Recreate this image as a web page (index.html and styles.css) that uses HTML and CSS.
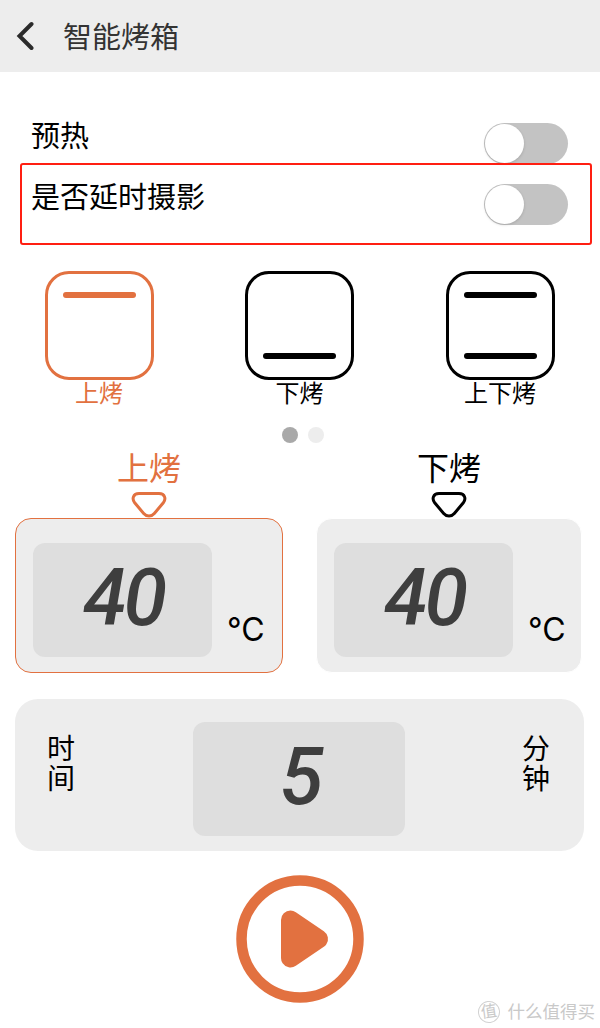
FILE: index.html
```html
<!DOCTYPE html>
<html lang="zh-CN">
<head>
<meta charset="UTF-8">
<meta name="viewport" content="width=device-width, initial-scale=1.0">
<title>智能烤箱</title>
<link rel="stylesheet" href="styles.css">
</head>
<body>
  <header>
    <svg class="back" width="18" height="30" viewBox="0 0 18 30">
      <path d="M15.5 3 L3.5 15 L15.5 27" fill="none" stroke="#2b2b2b" stroke-width="4" stroke-linecap="round"/>
    </svg>
    <h1>智能烤箱</h1>
  </header>

  <main>
    <div class="row">
      <span class="row-label">预热</span>
      <span class="switch"></span>
    </div>
    <div class="row highlight">
      <span class="row-label">是否延时摄影</span>
      <span class="switch"></span>
    </div>

    <div class="modes">
      <div class="mode active">
        <div class="mode-icon"><i></i></div>
        <span>上烤</span>
      </div>
      <div class="mode">
        <div class="mode-icon bottom"><i></i></div>
        <span>下烤</span>
      </div>
      <div class="mode">
        <div class="mode-icon"><i></i><i></i></div>
        <span>上下烤</span>
      </div>
    </div>

    <div class="dots">
      <span class="dot current"></span>
      <span class="dot"></span>
    </div>

    <div class="temps">
      <div class="temp active">
        <span class="temp-label">上烤</span>
        <svg class="arrow" width="36" height="27" viewBox="0 0 36 27">
          <path d="M8 2.6 H28 C34 2.6 35.3 8 32.3 11.8 L23.3 22.5 C20.4 25.9 15.6 25.9 12.7 22.5 L3.7 11.8 C0.7 8 2 2.6 8 2.6 Z" fill="none" stroke="currentColor" stroke-width="3"/>
        </svg>
        <div class="temp-card">
          <div class="screen">40</div>
          <span class="unit">°C</span>
        </div>
      </div>
      <div class="temp">
        <span class="temp-label">下烤</span>
        <svg class="arrow" width="36" height="27" viewBox="0 0 36 27">
          <path d="M8 2.6 H28 C34 2.6 35.3 8 32.3 11.8 L23.3 22.5 C20.4 25.9 15.6 25.9 12.7 22.5 L3.7 11.8 C0.7 8 2 2.6 8 2.6 Z" fill="none" stroke="currentColor" stroke-width="3"/>
        </svg>
        <div class="temp-card">
          <div class="screen">40</div>
          <span class="unit">°C</span>
        </div>
      </div>
    </div>

    <div class="time-card">
      <span class="time-text">时间</span>
      <div class="screen">5</div>
      <span class="time-text">分钟</span>
    </div>

    <svg class="play" width="128" height="128" viewBox="0 0 128 128">
      <circle cx="64" cy="64" r="58.5" fill="none" stroke="#e27140" stroke-width="10.5"/>
      <path d="M54.5 45 L82.5 64 L54.5 83 Z" fill="#e27140" stroke="#e27140" stroke-width="19" stroke-linejoin="round"/>
    </svg>
  </main>

  <div class="watermark">
    <span class="wm-logo">值</span>
    <span>什么值得买</span>
  </div>
</body>
</html>
```
FILE: styles.css
```css
* {
  box-sizing: border-box;
}

body {
  position: relative;
  margin: 0;
  height: 1028px;
  overflow: hidden;
  background: #fff;
  color: #000;
  font-family: Inter, "Noto Sans CJK SC", sans-serif;
}

header {
  display: flex;
  align-items: center;
  gap: 29px;
  height: 72px;
  padding-left: 16px;
  background: #ededed;
}

h1 {
  margin: 4px 0 0;
  color: #333;
  font-size: 29px;
  font-weight: 400;
  line-height: 40px;
}

main {
  display: flex;
  flex-direction: column;
  padding-top: 40px;
}

.row {
  display: flex;
  justify-content: space-between;
  height: 51px;
  padding: 3px 32px 0 31px;
}

.row-label {
  margin-top: 2px;
  font-size: 29px;
  line-height: 40px;
}

.switch {
  width: 84px;
  height: 41px;
  margin-top: 8px;
  padding: 1px;
  border-radius: 21px;
  background: #c3c3c3;
}

.switch::before {
  content: "";
  display: block;
  width: 39px;
  height: 39px;
  border-radius: 50%;
  background: #fff;
  box-shadow: 0 1px 3px rgba(0,0,0,0.15);
}

.highlight {
  height: 82px;
  margin: 0 8px 0 20px;
  padding: 11px 22px 0 9px;
  border: 2px solid #ff1f12;
  border-radius: 3px;
}

.modes {
  display: flex;
  justify-content: space-between;
  margin-top: 26px;
  padding: 0 46px 0 45px;
}

.mode {
  display: flex;
  flex-direction: column;
  align-items: center;
  width: 108px;
}

.mode-icon {
  display: flex;
  flex-direction: column;
  justify-content: space-between;
  width: 109px;
  height: 109px;
  padding: 18px 15px;
  border: 3px solid;
  border-radius: 24px;
}

.mode-icon.bottom {
  justify-content: flex-end;
}

.mode-icon i {
  height: 6px;
  border-radius: 3px;
  background: currentColor;
}

.mode span {
  margin-top: 1px;
  font-size: 24px;
  line-height: 26px;
}

.active {
  color: #e27140;
}

.dots {
  display: flex;
  gap: 10px;
  margin-top: 20px;
  padding-left: 282px;
}

.dot {
  width: 16px;
  height: 16px;
  border-radius: 50%;
  background: #ededed;
}

.dot.current {
  background: #a9a9a9;
}

.temps {
  display: flex;
  gap: 32px;
  margin-top: 6px;
  padding-left: 15px;
}

.temp {
  display: flex;
  flex-direction: column;
  align-items: center;
  width: 268px;
}

.temp-label {
  font-size: 32px;
  line-height: 40px;
}

.arrow {
  margin-top: 2px;
}

.temp-card {
  display: flex;
  width: 266px;
  height: 155px;
  padding: 24px 0 0 17px;
  border: 1px solid #fff;
  border-radius: 16px;
  background: #ededed;
}

.temp.active .temp-card {
  width: 268px;
  border: 1.5px solid #e27140;
}

.screen {
  width: 179px;
  height: 114px;
  padding: 15px 0 0 2px;
  border-radius: 12px;
  background: #dedede;
  color: #3e3e3e;
  font-family: Roboto, sans-serif;
  font-size: 79px;
  font-style: italic;
  font-weight: 500;
  letter-spacing: -3px;
  line-height: 80px;
  text-align: center;
}

.unit {
  margin: 67px 0 0 15px;
  color: #000;
  font-size: 32px;
  line-height: 40px;
}

.time-card {
  display: flex;
  justify-content: space-between;
  width: 569px;
  height: 152px;
  margin: 26px 0 0 15px;
  padding: 23px 33px 0 32px;
  border-radius: 23px;
  background: #ededed;
}

.time-card .screen {
  width: 212px;
}

.time-text {
  width: 29px;
  margin-top: 12px;
  font-size: 28px;
  line-height: 30px;
}

.play {
  align-self: center;
  margin: 24px 1px 0 0;
}

.watermark {
  position: absolute;
  right: 5px;
  bottom: 4px;
  display: flex;
  align-items: center;
  gap: 8px;
  color: #c9c9c9;
  font-size: 17.5px;
  line-height: 24px;
}

.wm-logo {
  width: 22px;
  height: 22px;
  border: 1px solid #d2d2d2;
  border-radius: 50%;
  font-size: 16px;
  line-height: 19px;
  text-align: center;
  transform: rotate(-8deg);
}
```
